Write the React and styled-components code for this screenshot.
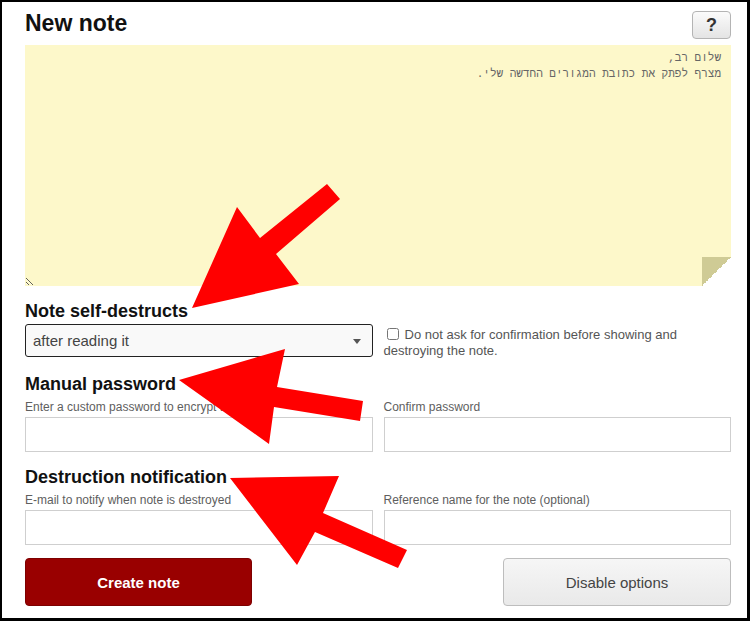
import React from "react";
import styled, { createGlobalStyle } from "styled-components";

const GlobalStyle = createGlobalStyle`
  html, body {
    margin: 0;
    padding: 0;
    background: #fff;
  }
  body {
    font-family: "Liberation Sans", Arial, sans-serif;
  }
`;

const Frame = styled.div`
  position: relative;
  width: 750px;
  height: 621px;
  box-sizing: border-box;
  border-style: solid;
  border-color: #000;
  border-width: 2px 3px 3px 2px;
  background: #fff;
  overflow: hidden;
`;

const Content = styled.div`
  display: flex;
  flex-direction: column;
  padding: 7px 16px 0 23px;
`;

const Header = styled.div`
  display: flex;
  justify-content: space-between;
  align-items: flex-start;
  height: 36px;
`;

const Title = styled.h1`
  margin: 0;
  font-size: 23px;
  line-height: 28px;
  font-weight: bold;
  color: #111;
`;

const HelpButton = styled.button`
  margin-top: 2px;
  width: 39px;
  height: 28px;
  padding: 0;
  border: 1px solid #b4b4b4;
  border-radius: 4px;
  background: linear-gradient(#fbfbfb, #e4e4e4);
  font-family: "Liberation Sans", Arial, sans-serif;
  font-size: 18px;
  font-weight: bold;
  color: #333;
`;

const NoteWrap = styled.div`
  position: relative;
  height: 241px;

  &::after {
    content: "";
    position: absolute;
    right: 0;
    bottom: 0;
    width: 29px;
    height: 29px;
    background: linear-gradient(to top left, #fff 50%, #cfcb95 50%);
    pointer-events: none;
  }
`;

const NoteText = styled.textarea`
  display: block;
  width: 100%;
  height: 100%;
  box-sizing: border-box;
  margin: 0;
  padding: 5px 10px;
  border: none;
  outline: none;
  background: #fdf8ca;
  font-family: "Liberation Mono", "DejaVu Sans Mono", monospace;
  font-size: 11px;
  line-height: 16px;
  color: #666;
  resize: vertical;
`;

const SectionTitle = styled.h2`
  margin: ${(p) => p.$top}px 0 0;
  font-size: 18px;
  line-height: 22px;
  font-weight: bold;
  color: #111;
`;

const Row = styled.div`
  display: grid;
  grid-template-columns: 1fr 1fr;
  column-gap: 11px;
  margin-top: ${(p) => p.$top || 0}px;
`;

const SelectWrap = styled.div`
  position: relative;

  &::after {
    content: "";
    position: absolute;
    right: 12px;
    top: 15px;
    border-left: 4px solid transparent;
    border-right: 4px solid transparent;
    border-top: 5px solid #555;
    pointer-events: none;
  }
`;

const Select = styled.select`
  display: block;
  width: 100%;
  height: 33px;
  box-sizing: border-box;
  padding: 0 26px 0 7px;
  border: 1px solid #222;
  border-radius: 3px;
  background: #f9f9f9;
  appearance: none;
  font-family: "Liberation Sans", Arial, sans-serif;
  font-size: 15px;
  color: #444;
  outline: none;
`;

const CheckLabel = styled.label`
  padding-top: 3px;
  font-size: 13px;
  line-height: 16px;
  color: #555;

  input {
    margin: 0 6px 0 3px;
    width: 12px;
    height: 12px;
    vertical-align: -1px;
  }
`;

const Field = styled.div`
  display: flex;
  flex-direction: column;
  gap: 2px;
`;

const FieldLabel = styled.label`
  font-size: 12px;
  line-height: 15px;
  color: #5e5e5e;
`;

const TextInput = styled.input`
  height: 35px;
  box-sizing: border-box;
  border: 1px solid #cfcfcf;
  border-radius: 0;
  padding: 0 8px;
  background: #fff;
  font-family: "Liberation Sans", Arial, sans-serif;
  font-size: 14px;
  outline: none;
`;

const ButtonRow = styled.div`
  display: flex;
  justify-content: space-between;
  margin-top: 13px;
`;

const ActionButton = styled.button`
  width: ${(p) => p.$width}px;
  height: 48px;
  border-radius: 4px;
  font-family: "Liberation Sans", Arial, sans-serif;
  font-size: 15px;
  cursor: pointer;
  border: 1px solid ${(p) => (p.$primary ? "#7d0000" : "#bdbdbd")};
  background: ${(p) =>
    p.$primary ? "#990000" : "linear-gradient(#f6f6f6, #e9e9e9)"};
  color: ${(p) => (p.$primary ? "#fff" : "#444")};
  font-weight: ${(p) => (p.$primary ? "bold" : "normal")};
`;

const ArrowLayer = styled.svg`
  position: absolute;
  left: -2px;
  top: -2px;
  width: 750px;
  height: 621px;
  pointer-events: none;
`;

const arrows = [
  "192,308 237,207 260,238 327,184 340,199 276,254 299,284",
  "179,380 285,349 277,387 363,401 360,421 274,407 269,444",
  "230,478 339,476 323,513 407,550 398,568 315,532 297,565",
];

const note = "שלום רב,\nמצרף לפתק את כתובת המגורים החדשה שלי.";

export default function App() {
  return (
    <>
      <GlobalStyle />
      <Frame>
        <Content>
          <Header>
            <Title>New note</Title>
            <HelpButton>?</HelpButton>
          </Header>

          <NoteWrap>
            <NoteText dir="rtl" defaultValue={note} spellCheck={false} />
          </NoteWrap>

          <SectionTitle $top={14}>Note self-destructs</SectionTitle>
          <Row $top={2}>
            <SelectWrap>
              <Select defaultValue="read">
                <option value="read">after reading it</option>
                <option value="1h">1 hour from now</option>
                <option value="1d">1 day from now</option>
              </Select>
            </SelectWrap>
            <CheckLabel>
              <input type="checkbox" />
              Do not ask for confirmation before showing and destroying the
              note.
            </CheckLabel>
          </Row>

          <SectionTitle $top={14}>Manual password</SectionTitle>
          <Row $top={5}>
            <Field>
              <FieldLabel>Enter a custom password to encrypt the note</FieldLabel>
              <TextInput type="password" />
            </Field>
            <Field>
              <FieldLabel>Confirm password</FieldLabel>
              <TextInput type="password" />
            </Field>
          </Row>

          <SectionTitle $top={14}>Destruction notification</SectionTitle>
          <Row $top={5}>
            <Field>
              <FieldLabel>E-mail to notify when note is destroyed</FieldLabel>
              <TextInput type="email" />
            </Field>
            <Field>
              <FieldLabel>Reference name for the note (optional)</FieldLabel>
              <TextInput type="text" />
            </Field>
          </Row>

          <ButtonRow>
            <ActionButton $primary $width={227}>
              Create note
            </ActionButton>
            <ActionButton $width={228}>Disable options</ActionButton>
          </ButtonRow>
        </Content>

        <ArrowLayer viewBox="0 0 750 621">
          {arrows.map((pts, i) => (
            <polygon key={i} points={pts} fill="#ff0000" />
          ))}
        </ArrowLayer>
      </Frame>
    </>
  );
}
